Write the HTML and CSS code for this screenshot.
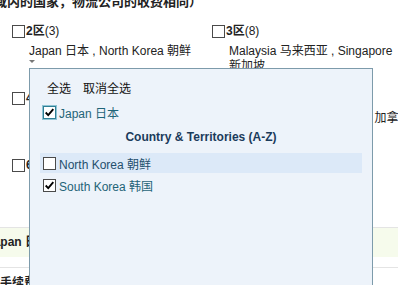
FILE: index.html
```html
<!DOCTYPE html>
<html lang="zh-CN">
<head>
    <meta charset="UTF-8">
    <meta name="viewport" content="width=device-width, initial-scale=1.0">
    <title>运费分区</title>
    <link rel="stylesheet" href="styles.css">
</head>
<body>
    <p class="note">域内的国家，物流公司的收费相同）</p>

    <div class="zones">
        <div class="zone open">
            <div class="zone-head"><span class="cb"></span><b>2区</b>(3)</div>
            <div class="zone-list">Japan 日本 , North Korea 朝鲜</div>
            <span class="toggle"></span>

            <div class="picker">
                <div class="picker-actions">
                    <a>全选</a>
                    <a>取消全选</a>
                </div>
                <div class="picker-item"><span class="cb checked focus"><svg viewBox="0 0 13 13" width="11" height="11"><path d="M2 6.5 L5 9.5 L11 2.5" fill="none" stroke="#000" stroke-width="2.2"/></svg></span>Japan 日本</div>
                <div class="picker-title">Country &amp; Territories (A-Z)</div>
                <div class="picker-item hover"><span class="cb"></span>North Korea 朝鲜</div>
                <div class="picker-item"><span class="cb checked"><svg viewBox="0 0 13 13" width="11" height="11"><path d="M2 6.5 L5 9.5 L11 2.5" fill="none" stroke="#000" stroke-width="2.2"/></svg></span>South Korea 韩国</div>
            </div>
        </div>
        <div class="zone">
            <div class="zone-head"><span class="cb"></span><b>3区</b>(8)</div>
            <div class="zone-list">Malaysia 马来西亚 , Singapore 新加坡</div>
            <span class="toggle"></span>
        </div>
        <div class="zone">
            <div class="zone-head"><span class="cb"></span><b>4区</b>(5)</div>
            <div class="zone-list">India 印度 , Vietnam 越南</div>
            <span class="toggle"></span>
        </div>
        <div class="zone">
            <div class="zone-head"><span class="cb"></span><b>5区</b>(6)</div>
            <div class="zone-list">Bahamas 巴哈马 , Canada 加拿大 , USA 美国</div>
            <span class="toggle"></span>
        </div>
        <div class="zone">
            <div class="zone-head"><span class="cb"></span><b>6区</b>(4)</div>
            <div class="zone-list">France 法国 , Italy 意大利</div>
            <span class="toggle"></span>
        </div>
        <div class="zone">
            <div class="zone-head"><span class="cb"></span><b>7区</b>(2)</div>
            <div class="zone-list">Brazil 巴西</div>
            <span class="toggle"></span>
        </div>
    </div>

    <div class="rates">
        <div class="rate-row selected"><b>Japan 日本</b></div>
        <div class="rate-gap"></div>
        <div class="rate-row"><b>手续费</b></div>
    </div>
</body>
</html>
```

FILE: styles.css
```css
html, body {
    overflow: hidden;
}
body {
    margin: 0;
    font-family: "Liberation Sans", Arial, "Noto Sans CJK SC", sans-serif;
    font-size: 12px;
    color: #222;
    background-color: #fff;
}
.note {
    margin: -6px 0 0 -6px;
    font-size: 13px;
    font-weight: bold;
    line-height: 16px;
    white-space: nowrap;
}
.zones {
    display: grid;
    grid-template-columns: 200px 200px;
    grid-auto-rows: 67px;
    padding: 14px 0 0 12px;
}
.zone {
    position: relative;
}
.zone-head {
    display: flex;
    align-items: center;
    height: 15px;
    line-height: 15px;
    white-space: nowrap;
}
.cb {
    box-sizing: border-box;
    width: 13px;
    height: 13px;
    border: 1px solid #4a4a4a;
    background-color: #fff;
    margin-right: 1px;
    flex: none;
    display: inline-flex;
    align-items: center;
    justify-content: center;
}
.cb.focus {
    border: 1px solid #2f7f96;
    box-shadow: 0 0 0 1px #8fc4d4;
}
.zone-list {
    margin-top: 5px;
    padding-left: 17px;
    line-height: 15px;
    word-break: keep-all;
    color: #222;
}
.toggle {
    display: block;
    width: 0;
    height: 0;
    margin: 1px 0 0 17px;
    border-left: 3px solid transparent;
    border-right: 3px solid transparent;
    border-top: 3px solid #777;
}
.picker {
    position: absolute;
    top: 44px;
    left: 17px;
    z-index: 2;
    box-sizing: border-box;
    width: 344px;
    height: 240px;
    padding: 12px 10px 0;
    background-color: #edf3fa;
    border: 1px solid #7d9bab;
}
.picker-actions {
    display: flex;
    gap: 12px;
    padding-left: 7px;
    line-height: 16px;
    color: #111;
}
.picker-item {
    display: flex;
    align-items: center;
    height: 20px;
    padding-left: 3px;
    color: #1f6478;
}
.picker-item .cb {
    margin-right: 3px;
}
.picker-actions + .picker-item {
    margin-top: 5px;
}
.picker-item.hover {
    background-color: #dce9f8;
    color: #244f6d;
}
.picker-item + .picker-item {
    margin-top: 2px;
}
.picker-title {
    margin: 5px 0 6px;
    line-height: 20px;
    text-align: center;
    font-weight: bold;
    color: #1b3b5b;
}
.rates {
    margin-top: 2px;
}
.rate-row {
    height: 29px;
    line-height: 29px;
    border-top: 1px solid #e4e4e4;
    text-indent: -13px;
    white-space: nowrap;
}
.rate-row.selected {
    background-color: #f6fbec;
}
.rate-gap {
    height: 10px;
}
.rate-row + .rate-gap + .rate-row {
    line-height: 30px;
    text-indent: 0;
}
```
